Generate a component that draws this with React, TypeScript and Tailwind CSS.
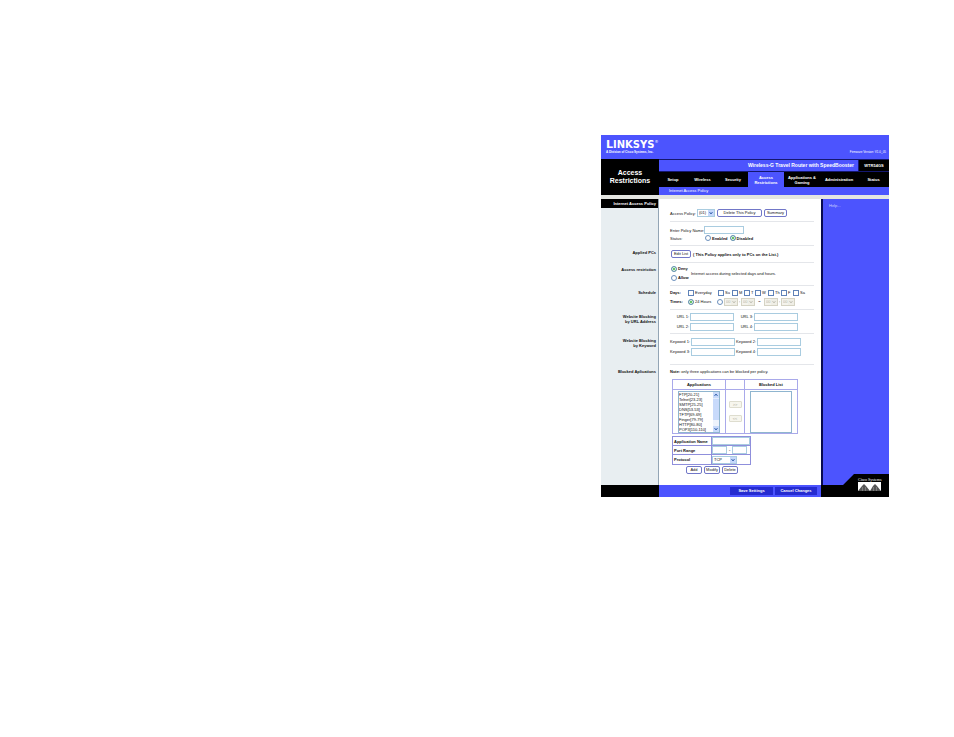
import type { ReactNode } from 'react'
import clsx from 'clsx'

const navItems = [
  { label: 'Setup', width: 'w-[28px]' },
  { label: 'Wireless', width: 'w-[31px]' },
  { label: 'Security', width: 'w-[30px]' },
  { label: 'Access Restrictions', width: 'w-[36px]', active: true },
  { label: 'Applications & Gaming', width: 'w-[36px]' },
  { label: 'Administration', width: 'w-[38px]' },
  { label: 'Status', width: 'flex-1' },
]

const days = [
  { label: 'Su', width: 'w-[14px]' },
  { label: 'M', width: 'w-[12px]' },
  { label: 'T', width: 'w-[11px]' },
  { label: 'W', width: 'w-[13px]' },
  { label: 'Th', width: 'w-[13px]' },
  { label: 'F', width: 'w-[12px]' },
  { label: 'Sa', width: 'w-[14px]' },
]

const applications = [
  'FTP[20-21]',
  'Telnet[23-23]',
  'SMTP[25-25]',
  'DNS[53-53]',
  'TFTP[69-69]',
  'Finger[79-79]',
  'HTTP[80-80]',
  'POP3[110-110]',
]

function Section({
  label,
  height,
  children,
  last,
  heading,
}: {
  label: string
  height: string
  children: ReactNode
  last?: boolean
  heading?: boolean
}) {
  return (
    <section className={clsx('flex', height)}>
      <div className="w-[58px] shrink-0 border-r border-[#93a5b5] bg-[#e8eef1] text-right font-bold">
        {heading ? (
          <h2 className="bg-black pr-[2px] leading-[9px] text-white">{label}</h2>
        ) : (
          <h3 className="whitespace-pre-line pt-1 pr-[2px] leading-[5px]">{label}</h3>
        )}
      </div>
      <div
        className={clsx(
          'ml-[11px] mr-[7px] flex flex-1 flex-col justify-center',
          !last && 'border-b border-[#e4e6ea]'
        )}
      >
        {children}
      </div>
    </section>
  )
}

function TextBox({ label, width }: { label: string; width: string }) {
  return <input type="text" aria-label={label} className={clsx('h-[8px] shrink-0 border border-[#a9cce0] bg-white', width)} />
}

function LabeledBox({ label, labelWidth, width }: { label: string; labelWidth: string; width: string }) {
  return (
    <label className="flex items-center">
      <span className={clsx('whitespace-nowrap pr-px text-right', labelWidth)}>{label}</span>
      <input type="text" className={clsx('h-[8px] border border-[#a9cce0] bg-white', width)} />
    </label>
  )
}

function Radio({ name, label, checked, bold }: { name: string; label: string; checked?: boolean; bold?: boolean }) {
  return (
    <label className={clsx('flex items-center gap-px', bold && 'font-bold')}>
      <input
        type="radio"
        name={name}
        defaultChecked={checked}
        className="size-[6px] appearance-none rounded-full border border-[#6c90bd] bg-white checked:bg-[#35b135] checked:shadow-[inset_0_0_0_1px_#fff]"
      />
      <span>{label}</span>
    </label>
  )
}

function Check({ label, width }: { label: string; width: string }) {
  return (
    <label className={clsx('flex items-center gap-px', width)}>
      <input type="checkbox" className="size-[6px] shrink-0 appearance-none border border-[#5f82b8] bg-white" />
      <span>{label}</span>
    </label>
  )
}

function Caret({ muted }: { muted?: boolean }) {
  return (
    <svg
      viewBox="0 0 6 6"
      aria-hidden="true"
      className={clsx('h-full w-[6px] shrink-0', muted ? 'bg-[#efeee6]' : 'bg-[#c5d8fb]')}
    >
      <path d="M1.5 2 3 4 4.500 2" fill="none" stroke={muted ? '#c4c3b8' : '#3c66b0'} strokeWidth="1" />
    </svg>
  )
}

function Dropdown({ label, value, width, disabled }: { label: string; value: string; width: string; disabled?: boolean }) {
  return (
    <span
      className={clsx(
        'flex h-[8px] items-center border',
        disabled ? 'border-[#d5d3c4] bg-[#f4f3ec] text-[#b5b4a8]' : 'border-[#a9cce0] bg-white',
        width
      )}
    >
      <select aria-label={label} disabled={disabled} className="h-full min-w-0 flex-1 appearance-none pl-px leading-[6px] opacity-100">
        <option>{value}</option>
      </select>
      <Caret muted={disabled} />
    </span>
  )
}

function Button({ children, width }: { children: ReactNode; width: string }) {
  return (
    <button
      type="button"
      className={clsx(
        'h-[8px] shrink-0 whitespace-nowrap rounded-[2px] border border-[#7177c8] bg-white text-center leading-[6px]',
        width
      )}
    >
      {children}
    </button>
  )
}

function MoveButton({ children, label }: { children: ReactNode; label: string }) {
  return (
    <button
      type="button"
      disabled
      aria-label={label}
      className="mx-auto block h-[7px] w-[13px] rounded-[1px] border border-[#deddcf] bg-[#f7f6ee] leading-[5px] text-[#a9a898]"
    >
      {children}
    </button>
  )
}

function Header() {
  return (
    <header>
      <div className="flex h-[24px] items-start justify-between bg-[#4c54fe] text-white">
        <div className="pl-[5px] pt-[4px]">
          <div className="flex h-[11px] items-baseline font-['DejaVu_Sans',Verdana,sans-serif] text-[10px] leading-[11px] font-bold">
            <span className="text-[11px]">L</span>
            <span>INKSYS</span>
            <span className="self-start text-[4px] leading-[5px] font-normal">®</span>
          </div>
          <p className="text-[3px] font-bold leading-[5px]">A Division of Cisco Systems, Inc.</p>
        </div>
        <p className="pr-[3px] pt-[15px] text-[3px] leading-[5px]">Firmware Version: V1.0_05</p>
      </div>
      <div className="flex h-[36px]">
        <h1 className="w-[58px] shrink-0 bg-black pt-[10px] text-center text-[7px] leading-[8px] font-bold text-white">
          Access
          <br />
          Restrictions
        </h1>
        <div className="flex flex-1 flex-col">
          <div className="flex h-[13px] border-y border-[#14176e] bg-[#4c54fe] text-[5px] font-bold leading-[11px] text-white">
            <p className="flex-1 pr-[4px] text-right">Wireless-G Travel Router with SpeedBooster</p>
            <p className="w-[31px] border-l border-[#14176e] bg-black text-center text-[4px]">WTR54GS</p>
          </div>
          <nav className="flex h-[15px] bg-black text-center font-bold leading-[5px] text-white">
            {navItems.map((item) => (
              <a
                key={item.label}
                href="#"
                className={clsx('flex items-center justify-center', item.width, item.active && 'bg-[#4c54fe]')}
              >
                {item.label}
              </a>
            ))}
          </nav>
          <div className="flex-1 bg-[#4c54fe] pl-[10px] leading-[7px] text-white">
            <a href="#">Internet Access Policy</a>
          </div>
        </div>
      </div>
      <div className="h-[4px] bg-[#e4e5e1]" />
    </header>
  )
}

function ApplicationTable() {
  return (
    <table className="mt-[5px] ml-[2px] w-[126px] table-fixed border-collapse border border-[#a9a9ea]">
      <thead>
        <tr className="h-[10px]">
          <th className="w-[53px] border border-[#a9a9ea] p-0">Applications</th>
          <th className="w-[19px] border border-[#a9a9ea] p-0" />
          <th className="border border-[#a9a9ea] p-0">Blocked List</th>
        </tr>
      </thead>
      <tbody>
        <tr className="h-[44px]">
          <td className="border border-[#a9a9ea] p-0">
            <div className="mx-auto flex h-[42px] w-[42px] border border-[#8fb5cf] bg-white">
              <select multiple size={8} aria-label="Applications" className="h-[40px] min-w-0 flex-1 appearance-none overflow-hidden p-0">
                {applications.map((app) => (
                  <option key={app} className="h-[5px] min-h-0 p-0 leading-[5px]">
                    {app}
                  </option>
                ))}
              </select>
              <svg viewBox="0 0 6 40" className="h-[40px] w-[6px] shrink-0 bg-[#eef3fc]" aria-hidden="true">
                <rect width="6" height="28" fill="#c8dafb" />
                <rect y="34" width="6" height="6" fill="#c8dafb" />
                <path d="M0 6.500h6" stroke="#fff" strokeWidth="0.5" />
                <path d="M1.500 4 3 2 4.500 4M1.500 36 3 38 4.500 36" fill="none" stroke="#3c66b0" />
              </svg>
            </div>
          </td>
          <td className="border border-[#a9a9ea] p-0">
            <div className="flex flex-col gap-[7px]">
              <MoveButton label="Block application">&gt;&gt;</MoveButton>
              <MoveButton label="Unblock application">&lt;&lt;</MoveButton>
            </div>
          </td>
          <td className="border border-[#a9a9ea] p-0">
            <select multiple aria-label="Blocked List" className="mx-auto block h-[42px] w-[42px] border border-[#8fb5cf] bg-white" />
          </td>
        </tr>
      </tbody>
    </table>
  )
}

function ApplicationForm() {
  return (
    <table className="mt-[2px] ml-[2px] w-[79px] table-fixed border-collapse border border-[#8f8fdc] text-left">
      <tbody>
        <tr className="h-[9px]">
          <th className="w-[39px] whitespace-nowrap border border-[#8f8fdc] p-0 pl-px">Application Name</th>
          <td className="border border-[#8f8fdc] p-0">
            <input type="text" aria-label="Application Name" className="block h-[8px] w-full border border-[#a9cce0]" />
          </td>
        </tr>
        <tr className="h-[9px]">
          <th className="border border-[#8f8fdc] p-0 pl-px">Port Range</th>
          <td className="border border-[#8f8fdc] p-0">
            <div className="flex gap-[2px]">
              <TextBox label="First port" width="w-[15px]" />
              <span className="font-bold leading-[8px]">-</span>
              <TextBox label="Last port" width="w-[15px]" />
            </div>
          </td>
        </tr>
        <tr className="h-[10px]">
          <th className="border border-[#8f8fdc] p-0 pl-px">Protocol</th>
          <td className="border border-[#8f8fdc] p-0">
            <Dropdown label="Protocol" value="TCP" width="w-[25px]" />
          </td>
        </tr>
      </tbody>
    </table>
  )
}

function Footer() {
  return (
    <footer className="flex h-[12px] bg-black font-bold text-white">
      <div className="w-[58px] shrink-0" />
      <div className="flex flex-1 items-center justify-end gap-[2px] bg-[#4c54fe] pr-[4px]">
        <button type="button" className="h-[8px] w-[43px] bg-[#252bd0] text-[4px] leading-[8px]">
          Save Settings
        </button>
        <button type="button" className="h-[8px] w-[42px] bg-[#252bd0] text-[4px] leading-[8px]">
          Cancel Changes
        </button>
      </div>
      <div className="w-[68px] shrink-0" />
    </footer>
  )
}

function CiscoMark() {
  return (
    <svg viewBox="0 0 66 23" className="h-[23px] w-[66px]" role="img" aria-label="Cisco Systems">
      <path d="M20 11 31 0H66V23H0V11z" fill="#000" />
      <text x="35" y="7" fontSize="4" fontFamily="Liberation Serif, Times New Roman, serif" fill="#fff">
        Cisco Systems
      </text>
      <rect x="35" y="8" width="23" height="9" fill="#fff" />
      <path d="M35 17 39 12 41 10 43 12 47 17zM47 17 50 12 52 10 54 12 58 17z" fill="#555" />
      <path d="M39.500 17v-4M42.500 17v-4M50.500 17v-4M53.500 17v-4" stroke="#999" strokeWidth="0.6" />
    </svg>
  )
}

export default function App() {
  return (
    <div className="min-h-screen bg-white pt-[135px] pr-[65px]">
      <main className="ml-auto w-full max-w-[288px] font-['Liberation_Sans',Arial,sans-serif] text-[4px] leading-[5px] text-[#111]">
        <Header />
        <div className="flex">
          <div className="flex-1">
            <Section label="Internet Access Policy" height="h-[23px]" heading>
              <div className="flex items-center gap-[2px] pt-[6px]">
                <span className="w-[25px] whitespace-nowrap">Access Policy:</span>
                <Dropdown label="Access Policy" value="(01)" width="w-[18px]" />
                <Button width="w-[45px]">Delete This Policy</Button>
                <Button width="w-[23px]">Summary</Button>
              </div>
            </Section>

            <Section label="" height="h-[24px]">
              <label className="flex items-center">
                <span className="w-[34px] whitespace-nowrap">Enter Policy Name:</span>
                <input type="text" className="h-[8px] w-[40px] border border-[#a9cce0] bg-white" />
              </label>
              <div className="flex items-center gap-[2px] pt-px">
                <span className="w-[33px]">Status:</span>
                <Radio name="status" label="Enabled" bold />
                <Radio name="status" label="Disabled" checked bold />
              </div>
            </Section>

            <Section label="Applied PCs" height="h-[17px]">
              <div className="flex items-center gap-[2px] pl-px">
                <Button width="w-[20px]">Edit List</Button>
                <span className="whitespace-nowrap font-bold">( This Policy applies only to PCs on the List.)</span>
              </div>
            </Section>

            <Section label="Access restriction" height="h-[23px]">
              <div className="flex items-center pb-[2px] pl-px">
                <div className="flex w-[20px] flex-col gap-[3px]">
                  <Radio name="access" label="Deny" checked bold />
                  <Radio name="access" label="Allow" bold />
                </div>
                <span className="whitespace-nowrap">Internet access during selected days and hours.</span>
              </div>
            </Section>

            <Section label="Schedule" height="h-[24px]">
              <div className="flex items-center">
                <span className="w-[18px] font-bold">Days:</span>
                <Check label="Everyday" width="w-[30px]" />
                {days.map((day) => (
                  <Check key={day.label} label={day.label} width={day.width} />
                ))}
              </div>
              <div className="flex items-center pt-[2px]">
                <span className="w-[18px] font-bold">Times:</span>
                <div className="w-[29px]">
                  <Radio name="times" label="24 Hours" checked />
                </div>
                <Radio name="times" label="" />
                <Dropdown label="Start hour" value="00" width="w-[14px]" disabled />
                <span className="w-[3px] text-center">:</span>
                <Dropdown label="Start minute" value="00" width="w-[14px]" disabled />
                <span className="w-[9px] text-center font-bold">~</span>
                <Dropdown label="End hour" value="00" width="w-[14px]" disabled />
                <span className="w-[3px] text-center">:</span>
                <Dropdown label="End minute" value="00" width="w-[14px]" disabled />
              </div>
            </Section>

            <Section label={'Website Blocking\nby URL Address'} height="h-[24px]">
              <div className="flex flex-col gap-[2px]">
                <div className="flex">
                  <LabeledBox label="URL 1:" labelWidth="w-[20px]" width="w-[44px]" />
                  <LabeledBox label="URL 3:" labelWidth="w-[20px]" width="w-[44px]" />
                </div>
                <div className="flex">
                  <LabeledBox label="URL 2:" labelWidth="w-[20px]" width="w-[44px]" />
                  <LabeledBox label="URL 4:" labelWidth="w-[20px]" width="w-[44px]" />
                </div>
              </div>
            </Section>

            <Section label={'Website Blocking\nby Keyword'} height="h-[31px]">
              <div className="flex flex-col gap-[2px] pb-[5px]">
                <div className="flex">
                  <LabeledBox label="Keyword 1:" labelWidth="w-[21px]" width="w-[44px]" />
                  <LabeledBox label="Keyword 2:" labelWidth="w-[22px]" width="w-[44px]" />
                </div>
                <div className="flex">
                  <LabeledBox label="Keyword 3:" labelWidth="w-[21px]" width="w-[44px]" />
                  <LabeledBox label="Keyword 4:" labelWidth="w-[22px]" width="w-[44px]" />
                </div>
              </div>
            </Section>

            <Section label="Blocked Aplications" height="h-[120px]" last>
              <div className="h-full pt-1">
                <p>
                  <b>Note:</b> only three applications can be blocked per policy.
                </p>
                <ApplicationTable />
                <ApplicationForm />
                <div className="flex gap-[2px] pt-px pl-4">
                  <Button width="w-[16px]">Add</Button>
                  <Button width="w-[16px]">Modify</Button>
                  <Button width="w-[16px]">Delete</Button>
                </div>
              </div>
            </Section>
          </div>

          <aside className="flex w-[68px] shrink-0 flex-col justify-between border-l-2 border-[#080a52] bg-[#4c54fe] text-[#c9ccff]">
            <a href="#" className="pt-1 pl-[6px]">
              Help...
            </a>
            {/* bottom of the mark sits flush with the footer bar */}
            <div className="-mb-[12px] h-[23px]">
              <CiscoMark />
            </div>
          </aside>
        </div>
        <Footer />
      </main>
    </div>
  )
}
